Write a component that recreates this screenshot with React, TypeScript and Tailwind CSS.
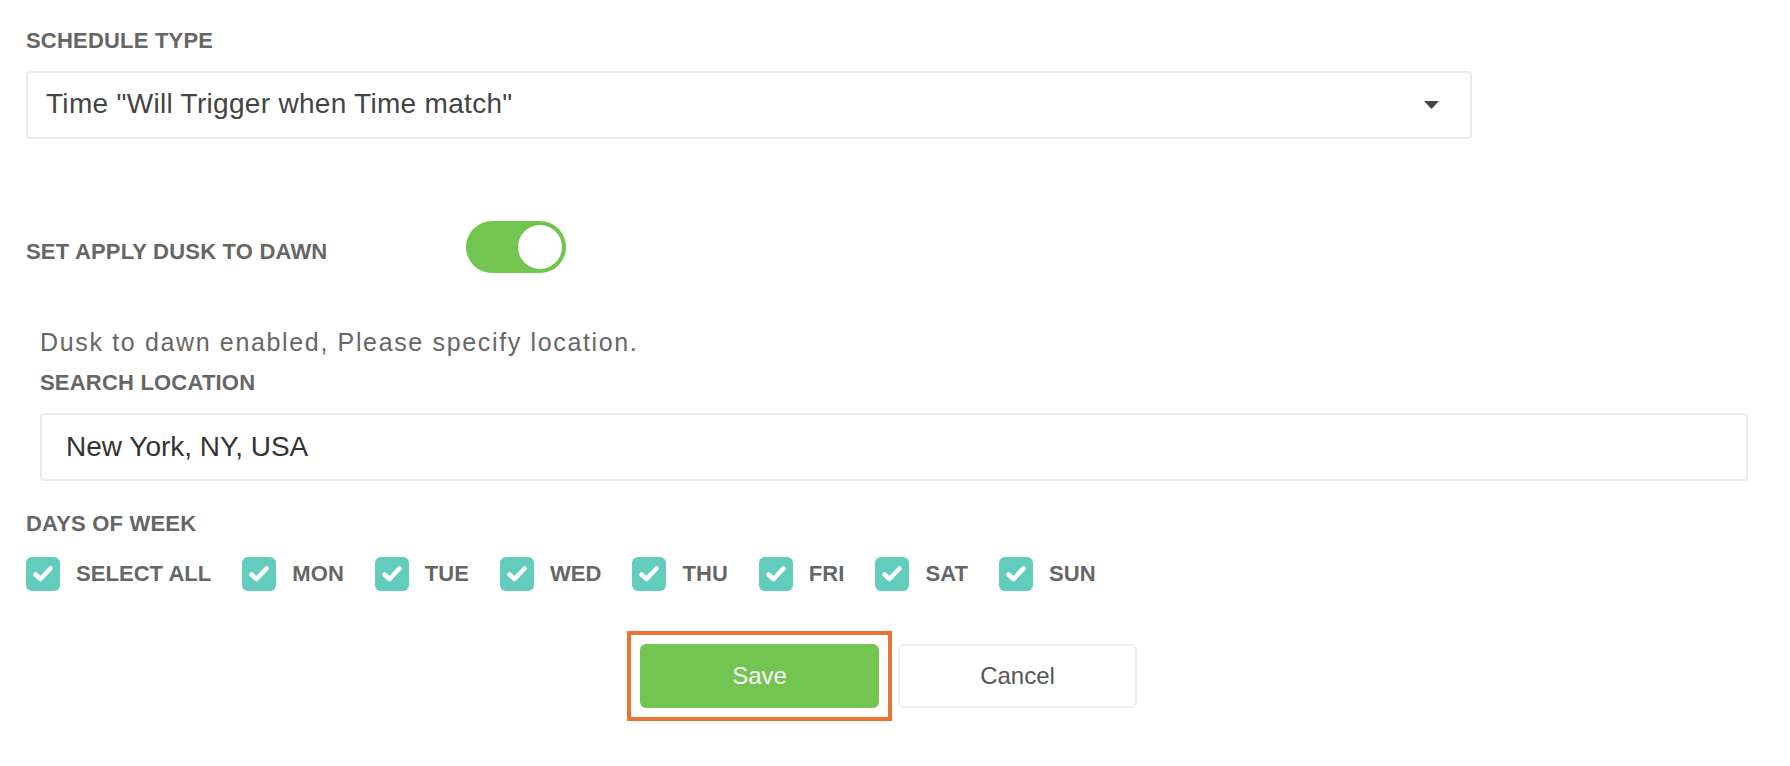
import React, { useState } from 'react'

const days = ['SELECT ALL', 'MON', 'TUE', 'WED', 'THU', 'FRI', 'SAT', 'SUN']

const CheckBox = ({ label }: { label: string }): React.JSX.Element => {
  return (
    <label className="flex items-center">
      <span className="flex h-[34px] w-[34px] items-center justify-center rounded-[6px] bg-[#62cdbd]">
        <svg width="22" height="18" viewBox="0 0 22 18" fill="none">
          <path d="M3.5 9.5 L8.5 14 L18.5 3.5" stroke="#fff" strokeWidth="4.5" strokeLinecap="round" strokeLinejoin="round" />
        </svg>
      </span>
      <span className="ml-4 text-[22px] font-bold leading-[26px] tracking-[0.05px] text-[#666]">{label}</span>
    </label>
  )
}

const App = (): React.JSX.Element => {
  const [dusk, setDusk] = useState(true)

  return (
    <div className="min-h-screen bg-white px-[26px] pt-[28px] font-['Liberation_Sans',Arial,sans-serif]">
      <div className="text-[22px] font-bold leading-[26px] tracking-[0.2px] text-[#666]">SCHEDULE TYPE</div>
      <div className="mt-[17px] flex h-[68px] w-[1446px] items-center justify-between rounded-[4px] border-2 border-[#ececec] pl-[18px] pr-[31px]">
        <span className="pb-[3px] text-[28px] leading-none tracking-[0.3px] text-[#444]">Time "Will Trigger when Time match"</span>
        <svg width="15" height="8" viewBox="0 0 15 8">
          <path d="M0 0 H15 L7.5 8 Z" fill="#444" />
        </svg>
      </div>

      <div className="mt-[82px] flex items-center">
        <div className="w-[440px] pt-[9px] text-[22px] font-bold leading-[26px] tracking-[0.2px] text-[#666]">
          SET APPLY DUSK TO DAWN
        </div>
        <button
          onClick={() => setDusk(!dusk)}
          className={`relative h-[52px] w-[100px] rounded-full ${dusk ? 'bg-[#72c54e]' : 'bg-[#ddd]'}`}
        >
          <span className={`absolute top-[4px] h-[44px] w-[44px] rounded-full bg-white ${dusk ? 'right-[4px]' : 'left-[4px]'}`} />
        </button>
      </div>

      <div className="ml-[14px] mr-[16px]">
        <p className="mt-[54px] text-[25px] leading-[30px] tracking-[1.65px] text-[#666]">
          Dusk to dawn enabled, Please specify location.
        </p>
        <div className="mt-[13px] text-[22px] font-bold leading-[26px] tracking-[0.2px] text-[#666]">SEARCH LOCATION</div>
        <div className="mt-[17px] flex h-[68px] items-center rounded-[4px] border-2 border-[#ececec] pl-[24px]">
          <span className="text-[28px] leading-none text-[#333]">New York, NY, USA</span>
        </div>
      </div>

      <div className="mt-[30px] text-[22px] font-bold leading-[26px] tracking-[0.2px] text-[#666]">DAYS OF WEEK</div>
      <div className="mt-[20px] flex items-center gap-[31px]">
        {days.map((d) => (
          <CheckBox key={d} label={d} />
        ))}
      </div>

      <div className="mt-[40px] flex items-center justify-center pr-[26px]">
        <div className="border-4 border-[#ec7430] p-[9px]">
          <button className="h-[64px] w-[239px] rounded-[6px] bg-[#72c550] text-[24px] text-white">Save</button>
        </div>
        <button className="ml-[6px] h-[64px] w-[239px] rounded-[6px] border-2 border-[#eeeeee] bg-white text-[24px] text-[#555]">
          Cancel
        </button>
      </div>
    </div>
  )
}

export default App
